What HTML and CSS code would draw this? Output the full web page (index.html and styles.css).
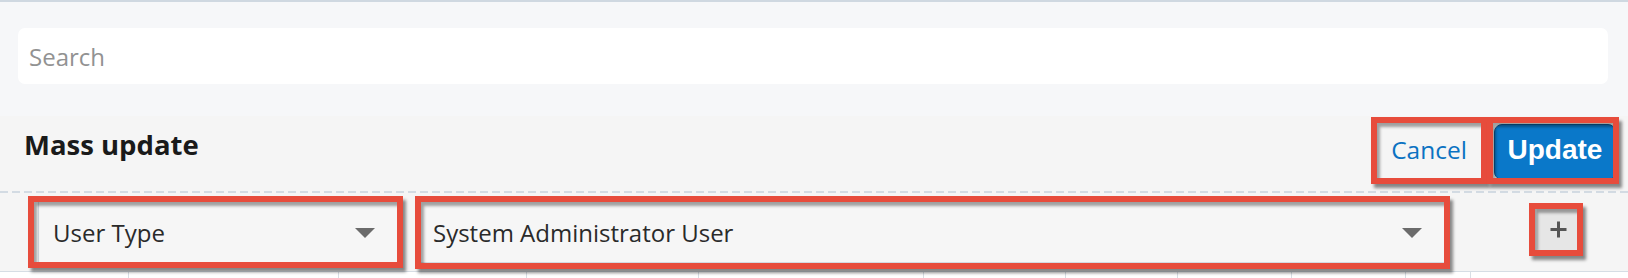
FILE: index.html
```html
<!DOCTYPE html>
<html>
<head>
<meta charset="utf-8">
<link rel="stylesheet" href="styles.css">
</head>
<body>
<div class="page">
  <div class="search-area">
    <div class="search-box"><span class="placeholder">Search</span></div>
  </div>
  <div class="mass">
    <div class="mass-header">
      <h1 class="title">Mass update</h1>
      <div class="actions">
        <div class="annot a-cancel"><button class="btn-cancel">Cancel</button></div>
        <div class="annot a-update"><button class="btn-update">Update</button></div>
      </div>
    </div>
    <div class="dash"></div>
    <div class="field-row">
      <div class="annot a-sel1">
        <div class="select sel1"><span>User Type</span><i class="caret"></i></div>
      </div>
      <div class="annot a-sel2">
        <div class="select sel2"><span>System Administrator User</span><i class="caret"></i></div>
      </div>
      <div class="annot a-plus">
        <button class="btn-plus"><svg width="19" height="19" viewBox="0 0 19 19"><path d="M9.5 1.5v16M1.5 9.5h16" stroke="#555" stroke-width="3" fill="none"/></svg></button>
      </div>
    </div>
    <div class="table-strip">
      <div class="col" style="width:128px"></div>
      <div class="col" style="width:210px"></div>
      <div class="col" style="width:188px"></div>
      <div class="col" style="width:172px"></div>
      <div class="col" style="width:225px"></div>
      <div class="col" style="width:142px"></div>
      <div class="col" style="width:112px"></div>
      <div class="col" style="width:114px"></div>
      <div class="col" style="width:114px"></div>
      <div class="col" style="width:65px"></div>
      <div class="col" style="width:158px"></div>
    </div>
  </div>
</div>
</body>
</html>
```

FILE: styles.css
```css
* { box-sizing: border-box; }
html, body { margin: 0; padding: 0; }
body {
  width: 1628px;
  height: 278px;
  overflow: hidden;
  background: #f5f5f5;
  font-family: "Open Sans", "Noto Sans", sans-serif;
}
.page { width: 1628px; }

.search-area {
  background: #f6f7f9;
  border-top: 2px solid #cfd8e1;
  padding: 26px 20px 32px 18px;
}
.search-box {
  height: 56px;
  background: #fff;
  border-radius: 7px;
  display: flex;
  align-items: center;
  padding-left: 11px;
}
.placeholder {
  font-size: 24px;
  color: #929292;
}

.mass { background: #f5f5f5; }
.mass-header {
  height: 75px;
  display: flex;
  justify-content: space-between;
  align-items: flex-start;
  padding: 8px 12px 0 24px;
}
.title {
  margin: 3px 0 0 0;
  font-size: 27.5px;
  line-height: 36px;
  font-weight: 700;
  color: #1a1a1a;
}
.actions {
  display: flex;
  gap: 13px;
}
.btn-cancel {
  height: 56px;
  width: 104px;
  border: 0;
  background: transparent;
  color: #0b72c2;
  font-family: "Open Sans", sans-serif;
  font-size: 24.5px;
  padding: 0 0 6px 0;
}
.btn-update {
  height: 56px;
  width: 122px;
  border: 1px solid #0a5a98;
  border-radius: 8px;
  background: #0a78c9;
  color: #fff;
  font-family: "Liberation Sans", Arial, sans-serif;
  font-weight: 700;
  font-size: 28px;
  padding: 0 0 4px 0;
}

.dash {
  height: 2px;
  background: repeating-linear-gradient(to right, #d3dbe3 0 8px, transparent 8px 12px);
}

.field-row {
  height: 78px;
  display: flex;
  align-items: center;
  padding-left: 38px;
}
.select {
  height: 62px;
  border: 1px solid #d2dae2;
  background: #f6f6f6;
  display: flex;
  align-items: center;
  justify-content: space-between;
  padding: 0 22px 0 14px;
  font-size: 24px;
  color: #2a2a2a;
}
.sel1 { width: 360px; }
.sel2 { width: 1025px; padding-left: 12px; }
.a-sel2 { margin-left: 22px; }
.caret {
  width: 0; height: 0;
  border-left: 10px solid transparent;
  border-right: 10px solid transparent;
  border-top: 10px solid #6b6b6b;
  margin-top: 2px;
}
.a-plus { margin-left: 92px; align-self: flex-start; margin-top: 15px; }
.btn-plus {
  width: 43px;
  height: 42px;
  border: 0;
  background: #e6e6e6;
  border-radius: 2px;
  display: flex;
  align-items: center;
  justify-content: center;
  padding: 0;
}

.table-strip {
  border-top: 1px solid #d6dde4;
  background: #fff;
  height: 10px;
  display: flex;
}
.col {
  height: 100%;
  border-left: 1px solid #d9dfe5;
  flex: none;
}
.col:first-child { border-left: 0; }

/* annotation boxes */
.annot { position: relative; }
.annot::after {
  content: "";
  position: absolute;
  inset: -6px;
  border: 6px solid #e74c3c;
  box-shadow: 3px 4px 3px rgba(0,0,0,0.45), inset 3px 4px 3px rgba(0,0,0,0.35);
  pointer-events: none;
}
.a-sel1::after { inset: -5px -5px -5px -10px; }
.a-sel2::after { inset: -5px -5px -6px -5px; }
.a-plus::after { inset: -5px -3px -6px -8px; }
.a-cancel::after { inset: -7px -6px -4px -6px; }
.a-update::after { inset: -7px -3px -4px -7px; }
```
